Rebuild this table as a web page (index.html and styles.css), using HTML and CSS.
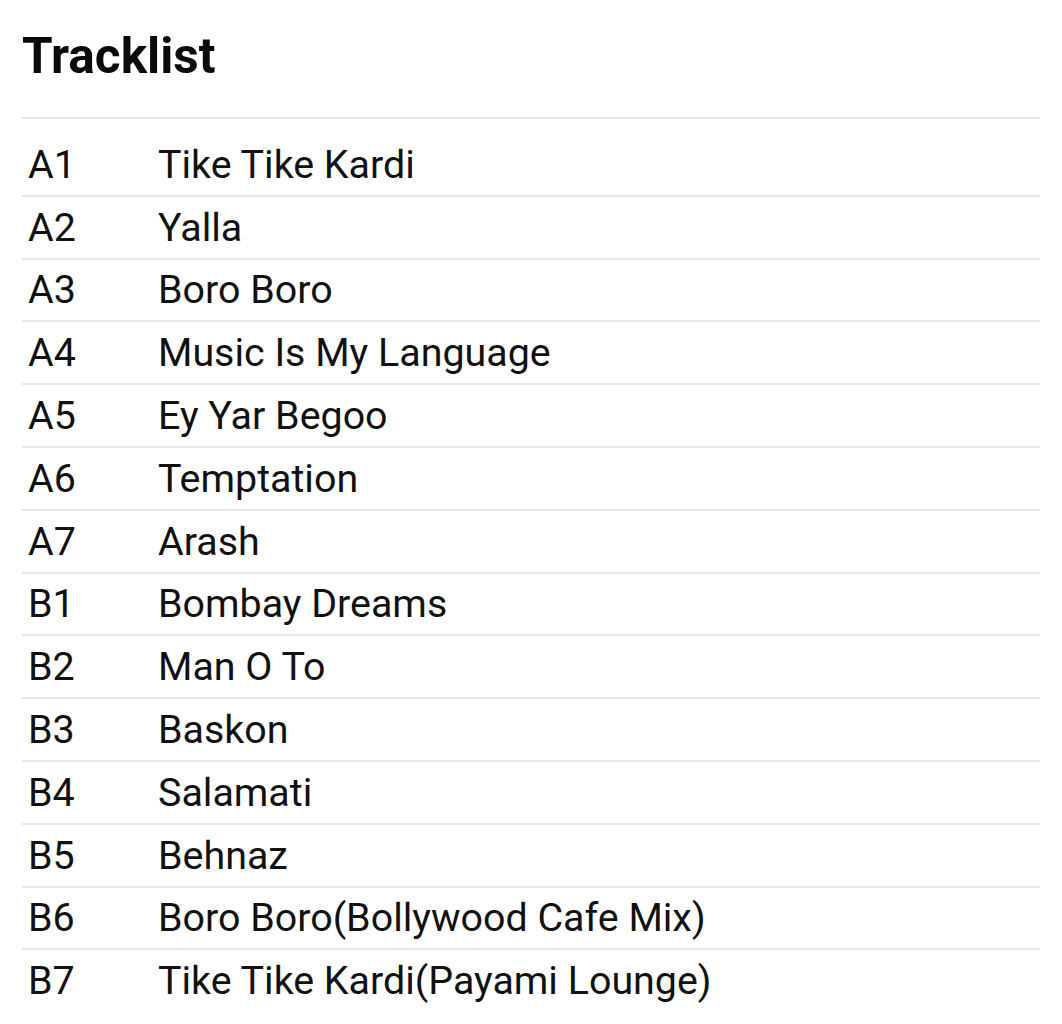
FILE: index.html
```html
<!DOCTYPE html>
<html>
<head>
<meta charset="utf-8">
<link rel="stylesheet" href="styles.css">
</head>
<body>
<main class="page">
  <h1 class="title">Tracklist</h1>
  <ol class="tracks">
    <li class="track"><span class="pos">A1</span><span class="name">Tike Tike Kardi</span></li>
    <li class="track"><span class="pos">A2</span><span class="name">Yalla</span></li>
    <li class="track"><span class="pos">A3</span><span class="name">Boro Boro</span></li>
    <li class="track"><span class="pos">A4</span><span class="name">Music Is My Language</span></li>
    <li class="track"><span class="pos">A5</span><span class="name">Ey Yar Begoo</span></li>
    <li class="track"><span class="pos">A6</span><span class="name">Temptation</span></li>
    <li class="track"><span class="pos">A7</span><span class="name">Arash</span></li>
    <li class="track"><span class="pos">B1</span><span class="name">Bombay Dreams</span></li>
    <li class="track"><span class="pos">B2</span><span class="name">Man O To</span></li>
    <li class="track"><span class="pos">B3</span><span class="name">Baskon</span></li>
    <li class="track"><span class="pos">B4</span><span class="name">Salamati</span></li>
    <li class="track"><span class="pos">B5</span><span class="name">Behnaz</span></li>
    <li class="track"><span class="pos">B6</span><span class="name">Boro Boro(Bollywood Cafe Mix)</span></li>
    <li class="track"><span class="pos">B7</span><span class="name">Tike Tike Kardi(Payami Lounge)</span></li>
  </ol>
</main>
</body>
</html>
```
FILE: styles.css
```css
html, body {
  margin: 0;
  padding: 0;
  background: #ffffff;
}
body {
  font-family: Roboto, "Liberation Sans", sans-serif;
  color: #111111;
}
.page {
  padding: 27px 22px 0 22px;
}
.title {
  margin: 0;
  font-size: 49.5px;
  font-weight: 700;
  line-height: normal;
  color: #0a0a0a;
}
.tracks {
  list-style: none;
  margin: 32px 0 0 0;
  padding: 15px 0 0 0;
  border-top: 2px solid #e6e6e6;
}
.track {
  display: flex;
  align-items: center;
  height: 60.8px;
  border-bottom: 2px solid #e6e6e6;
  font-size: 39.4px;
  line-height: normal;
}
.track:last-child {
  border-bottom: none;
}
.pos {
  width: 130px;
  padding-left: 6px;
  flex: none;
}
.name {
  flex: 1;
}
```
